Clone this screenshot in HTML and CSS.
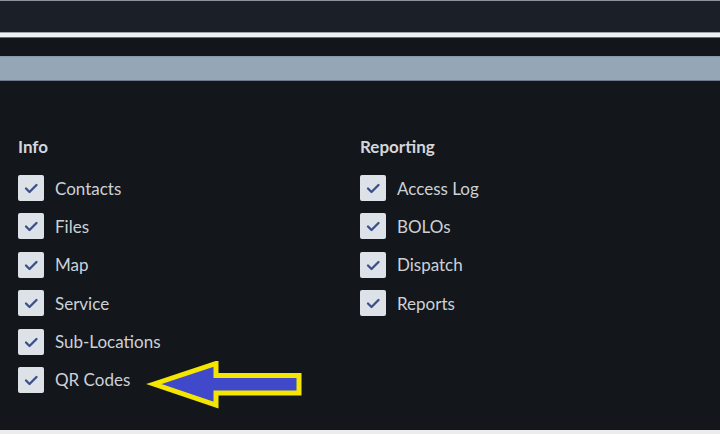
FILE: index.html
```html
<!DOCTYPE html>
<html>
<head>
<meta charset="utf-8">
<link rel="stylesheet" href="styles.css">
</head>
<body>
<div class="topline"></div>
<div class="topbar"></div>
<div class="whiteline"></div>
<div class="gapbar"></div>
<div class="band"></div>
<main class="content">
  <section class="col">
    <h3 class="heading">Info</h3>
    <ul class="list">
      <li class="item"><span class="box"><svg viewBox="0 0 26 26"><path d="M8 13.5 L11.5 17 L18.5 10"/></svg></span>Contacts</li>
      <li class="item"><span class="box"><svg viewBox="0 0 26 26"><path d="M8 13.5 L11.5 17 L18.5 10"/></svg></span>Files</li>
      <li class="item"><span class="box"><svg viewBox="0 0 26 26"><path d="M8 13.5 L11.5 17 L18.5 10"/></svg></span>Map</li>
      <li class="item"><span class="box"><svg viewBox="0 0 26 26"><path d="M8 13.5 L11.5 17 L18.5 10"/></svg></span>Service</li>
      <li class="item"><span class="box"><svg viewBox="0 0 26 26"><path d="M8 13.5 L11.5 17 L18.5 10"/></svg></span>Sub-Locations</li>
      <li class="item"><span class="box"><svg viewBox="0 0 26 26"><path d="M8 13.5 L11.5 17 L18.5 10"/></svg></span>QR Codes</li>
    </ul>
  </section>
  <section class="col">
    <h3 class="heading">Reporting</h3>
    <ul class="list">
      <li class="item"><span class="box"><svg viewBox="0 0 26 26"><path d="M8 13.5 L11.5 17 L18.5 10"/></svg></span>Access Log</li>
      <li class="item"><span class="box"><svg viewBox="0 0 26 26"><path d="M8 13.5 L11.5 17 L18.5 10"/></svg></span>BOLOs</li>
      <li class="item"><span class="box"><svg viewBox="0 0 26 26"><path d="M8 13.5 L11.5 17 L18.5 10"/></svg></span>Dispatch</li>
      <li class="item"><span class="box"><svg viewBox="0 0 26 26"><path d="M8 13.5 L11.5 17 L18.5 10"/></svg></span>Reports</li>
    </ul>
  </section>
  <svg class="arrow" viewBox="0 0 160 52" width="160" height="52">
    <polygon points="8,23 70,2.5 70,14.5 153,14.5 153,32 70,32 70,44" />
  </svg>
</main>
<div class="footer"></div>
</body>
</html>
```
FILE: styles.css
```css
html, body {
  margin: 0;
  padding: 0;
}
body {
  width: 720px;
  height: 434px;
  overflow: hidden;
  background: #13171c;
  font-family: Lato, "Open Sans", sans-serif;
}
.topline {
  height: 1px;
  background: #8e949c;
}
.topbar {
  height: 31px;
  background: #1b1f27;
}
.whiteline {
  height: 6px;
  background: #eef0f6;
  border-top: 1px solid #9ea3ab;
  border-bottom: 1px solid #6b7077;
  box-sizing: border-box;
}
.gapbar {
  height: 18px;
  background: #12161b;
}
.band {
  height: 25px;
  background: #95a6b6;
  border-top: 1px solid #8898aa;
  border-bottom: 1px solid #6c7a89;
  box-sizing: border-box;
}
.content {
  position: relative;
  height: 349px;
  box-sizing: border-box;
  padding: 55px 0 0 18px;
  display: flex;
  background: #13171c;
}
.col {
  width: 342px;
}
.heading {
  margin: 0 0 18px 0;
  font-size: 17px;
  line-height: 21px;
  font-weight: 700;
  color: #d3d6db;
}
.list {
  list-style: none;
  margin: 0;
  padding: 0;
  display: flex;
  flex-direction: column;
  gap: 12.4px;
}
.item {
  display: flex;
  align-items: center;
  gap: 11px;
  height: 26px;
  font-size: 17px;
  color: #cdd1d7;
}
.box {
  width: 26px;
  height: 26px;
  border-radius: 2px;
  background: #dde1e8;
  display: block;
  flex: none;
}
.box svg {
  width: 26px;
  height: 26px;
  display: block;
}
.box path {
  fill: none;
  stroke: #3b4f88;
  stroke-width: 2.3;
  stroke-linecap: round;
  stroke-linejoin: round;
}
.arrow {
  position: absolute;
  left: 146px;
  top: 280px;
}
.arrow polygon {
  fill: #4149cb;
  stroke: #f4e600;
  stroke-width: 5;
  stroke-linejoin: miter;
  stroke-miterlimit: 10;
}
.footer {
  height: 4px;
  background: #ececec;
}
```
